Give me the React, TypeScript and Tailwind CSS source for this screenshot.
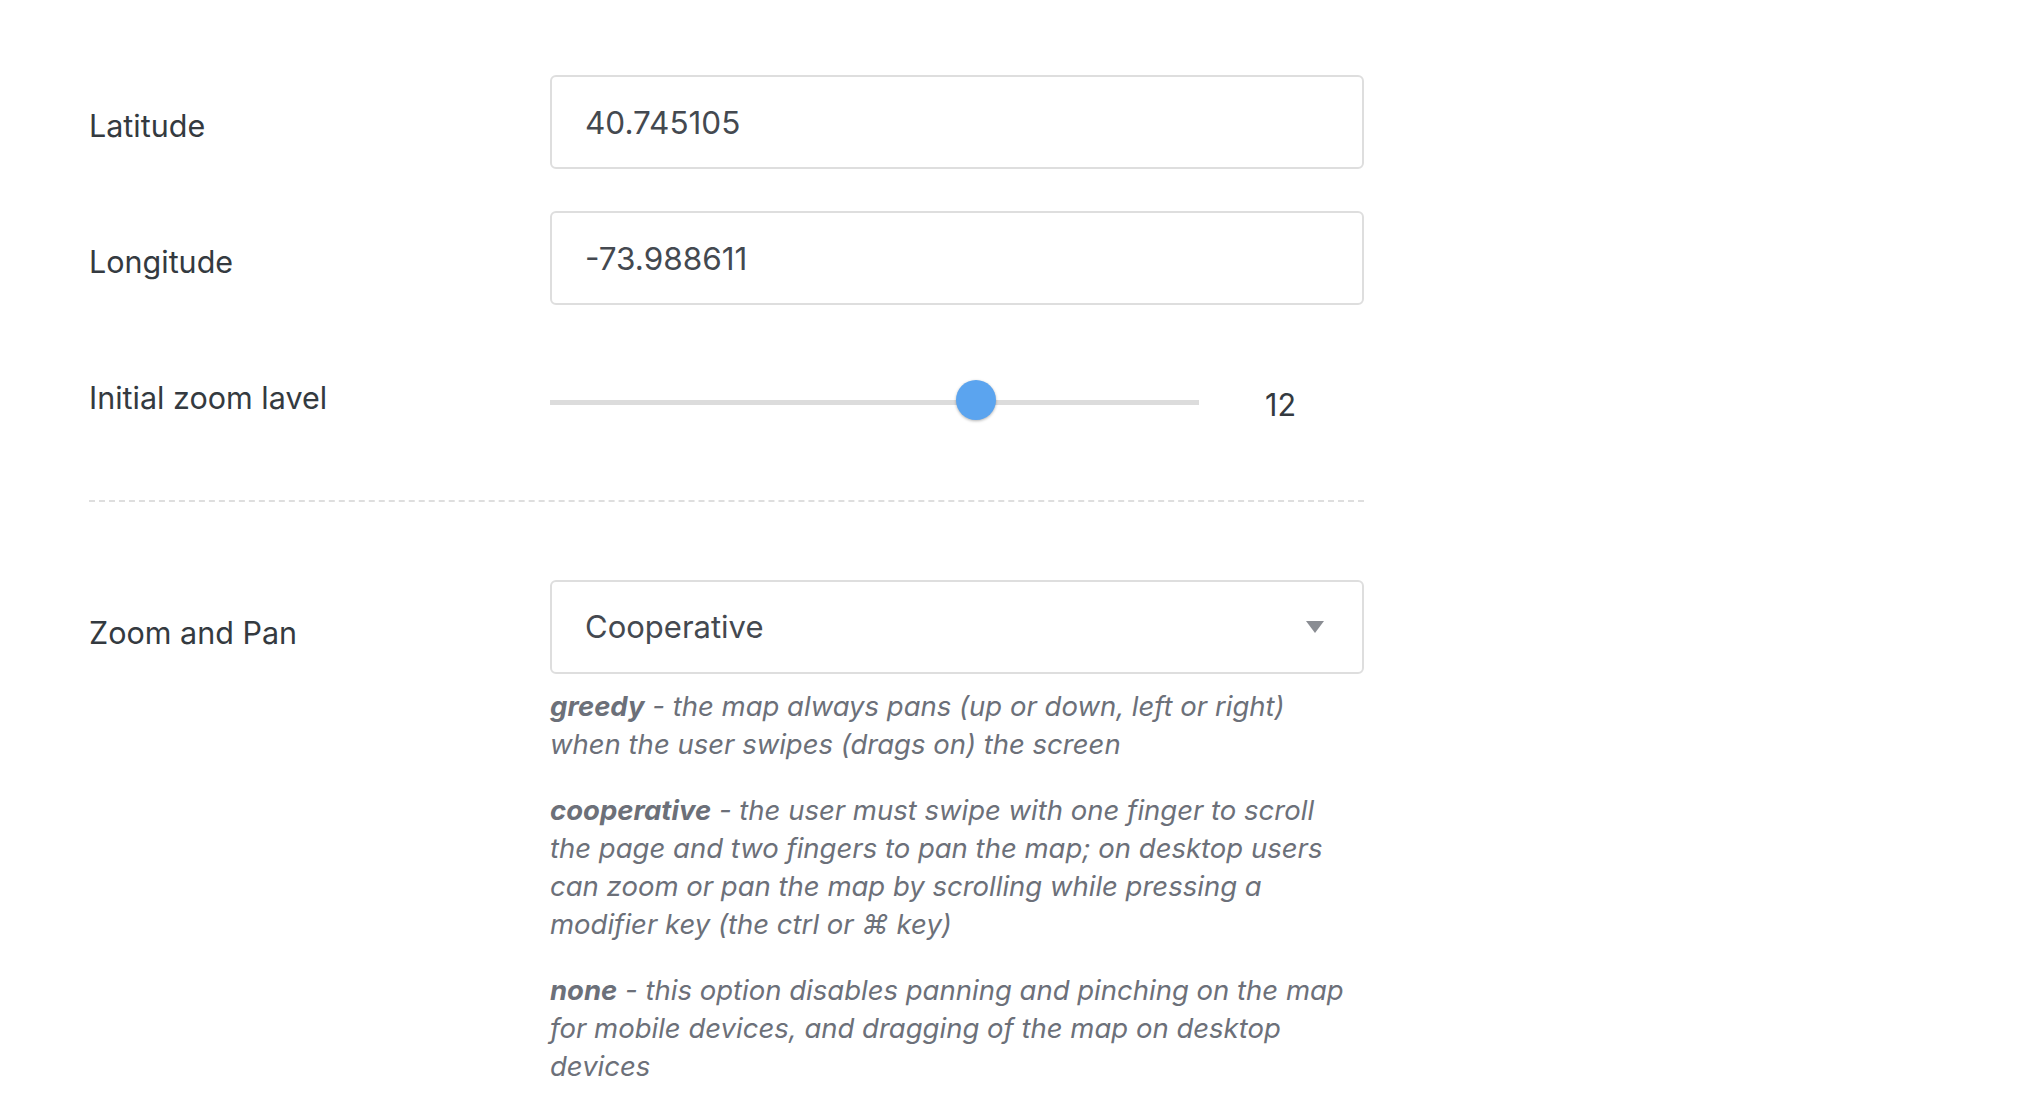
const FONT = "font-['Inter','Liberation_Sans',sans-serif]";

type Option = {
  term: string;
  text: string;
};

const OPTIONS: Option[] = [
  {
    term: "greedy",
    text: "the map always pans (up or down, left or right) when the user swipes (drags on) the screen",
  },
  {
    term: "cooperative",
    text: "the user must swipe with one finger to scroll the page and two fingers to pan the map; on desktop users can zoom or pan the map by scrolling while pressing a modifier key (the ctrl or ⌘ key)",
  },
  {
    term: "none",
    text: "this option disables panning and pinching on the map for mobile devices, and dragging of the map on desktop devices",
  },
];

function Field({ label, children }: { label: string; children: React.ReactNode }) {
  return (
    <div className="flex items-center">
      <div className="w-[461px] shrink-0 pt-[8px] text-[30.5px] text-[#343a40]">{label}</div>
      <div className="w-[814px]">{children}</div>
    </div>
  );
}

function TextInput({ value }: { value: string }) {
  return (
    <input
      readOnly
      value={value}
      className="h-[94px] w-full rounded-[6px] border-2 border-[#dedede] bg-white px-[33px] text-[31.5px] text-[#444950] outline-none"
    />
  );
}

function ZoomSlider({ value, min, max }: { value: number; min: number; max: number }) {
  const pct = (value - min) / (max - min);
  return (
    <div className="flex h-[94px] items-center">
      <div className="relative mt-[16px] h-[5px] w-[649px] bg-[#dcdcdc]">
        <div
          className="absolute top-[-20px] h-[40px] w-[40px] rounded-full bg-[#5ba4ef] shadow-[0_1px_3px_rgba(0,0,0,0.3)]"
          style={{ left: `calc(${pct * 100}% - ${pct * 40}px)` }}
        />
      </div>
      <span className="ml-[66px] pt-[22px] text-[30.5px] text-[#343a40]">{value}</span>
    </div>
  );
}

export default function App() {
  return (
    <div className={`${FONT} min-h-screen bg-white pl-[89px] pt-[75px]`}>
      <div className="flex w-[1275px] flex-col gap-[42px]">
        <Field label="Latitude">
          <TextInput value="40.745105" />
        </Field>
        <Field label="Longitude">
          <TextInput value="-73.988611" />
        </Field>
        <Field label="Initial zoom lavel">
          <ZoomSlider value={12} min={0} max={18} />
        </Field>
      </div>

      <div className="mt-[59px] w-[1275px] border-t-2 border-dashed border-[#dedede]" />

      <div className="mt-[78px] flex w-[1275px]">
        <div className="w-[461px] shrink-0 pt-[30px] text-[30.5px] text-[#343a40]">Zoom and Pan</div>
        <div className="w-[814px]">
          <div className="flex h-[94px] items-center justify-between rounded-[6px] border-2 border-[#dedede] bg-white pl-[33px] pr-[38px] text-[31px] text-[#444950]">
            <span>Cooperative</span>
            <svg width="18" height="12" viewBox="0 0 18 12">
              <path d="M0 0 L18 0 L9 12 Z" fill="#8a8d93" />
            </svg>
          </div>
          <div className="mt-[13px] flex w-[800px] flex-col gap-[28px] text-[27.5px] italic leading-[38px] text-[#6c7079]">
            {OPTIONS.map((o) => (
              <p key={o.term}>
                <b className="font-bold">{o.term}</b> - {o.text}
              </p>
            ))}
          </div>
        </div>
      </div>
    </div>
  );
}
